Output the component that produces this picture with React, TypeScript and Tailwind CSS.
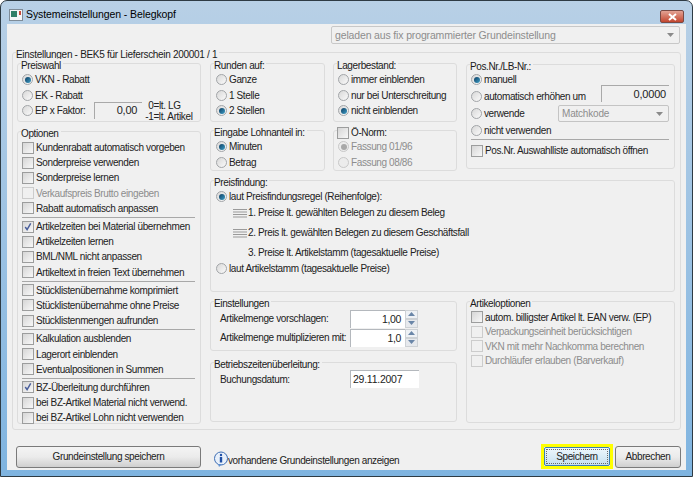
import React from "react";

const Group = ({ title, className = "", children }: { title: React.ReactNode; className?: string; children?: React.ReactNode }) => (
  <div className={`relative rounded-[3px] border border-[#dcdcdc] ${className}`}>
    <div className="absolute -top-[5px] left-[3px] whitespace-nowrap bg-[#f0f0f0] pr-[2px] leading-[13px] text-[#1a1a1a]">{title}</div>
    {children}
  </div>
);

const Radio = ({ checked = false, disabled = false }: { checked?: boolean; disabled?: boolean }) => (
  <span
    className={`flex h-[11px] w-[11px] shrink-0 items-center justify-center rounded-full border ${
      disabled ? "border-[#c8c8c8] bg-[#ececec]" : "border-[#a2a5a8] bg-gradient-to-br from-[#d8d8d8] to-[#fafafa]"
    }`}
  >
    {checked && (
      <span
        className={`h-[6px] w-[6px] rounded-full ${
          disabled ? "bg-[#a8a8a8]" : "bg-gradient-to-br from-[#0f3f63] to-[#3fa0c8]"
        }`}
      />
    )}
  </span>
);

const Check = ({ checked = false, disabled = false }: { checked?: boolean; disabled?: boolean }) => (
  <span
    className={`flex h-[12px] w-[12px] shrink-0 items-center justify-center border ${
      disabled ? "border-[#cccccc] bg-[#f0f0f0]" : "border-[#9c9d9d] bg-gradient-to-br from-[#d6d6d6] to-[#f8f8f8]"
    }`}
  >
    {checked && (
      <svg width="10" height="10" viewBox="0 0 11 11">
        <path d="M2.5 5.5 L4.5 8.5 L8.5 1.5" fill="none" stroke="#4a5f9c" strokeWidth="1.6" />
      </svg>
    )}
  </span>
);

const RadioRow = ({ label, checked, disabled, className = "h-[15.5px]" }: { label: string; checked?: boolean; disabled?: boolean; className?: string }) => (
  <div className={`flex items-center gap-[2px] whitespace-nowrap ${className} ${disabled ? "text-[#8d8d8d]" : ""}`}>
    <Radio checked={checked} disabled={disabled} />
    <span>{label}</span>
  </div>
);

const CheckRow = ({ label, checked, disabled, className = "h-[15.2px]" }: { label: string; checked?: boolean; disabled?: boolean; className?: string }) => (
  <div className={`flex items-center gap-[2px] whitespace-nowrap ${className} ${disabled ? "text-[#8d8d8d]" : ""}`}>
    <Check checked={checked} disabled={disabled} />
    <span>{label}</span>
  </div>
);

const Sep = () => (
  <div className="flex h-[3px] items-center">
    <div className="w-full border-t border-[#a8a8a8]" />
  </div>
);

const DragIcon = () => (
  <svg width="14" height="10" viewBox="0 0 14 10" className="shrink-0">
    <path d="M0 1.5H14M0 4H14M0 6.5H14M0 9H14" stroke="#9a9a9a" strokeWidth="1" />
  </svg>
);

const Arrow = ({ color = "#8a8a8a" }: { color?: string }) => (
  <svg width="7" height="4" viewBox="0 0 7 4" className="shrink-0">
    <path d="M0 0H7L3.5 4Z" fill={color} />
  </svg>
);

const Spin = ({ value, className = "" }: { value: string; className?: string }) => (
  <div className={`flex h-[18px] w-[68px] ${className}`}>
    <div className="flex w-[55px] items-center justify-end border-l border-t border-[#b4b8bd] bg-white pr-[4px] text-[10.5px]">{value}</div>
    <div className="flex w-[13px] flex-col bg-white">
      <div className="flex h-[9px] items-center justify-center border border-[#cdd1d5] bg-[#eef1f5]">
        <svg width="7" height="4" viewBox="0 0 7 4"><path d="M0 4H7L3.5 0Z" fill="#6a86a8" /></svg>
      </div>
      <div className="flex h-[9px] items-center justify-center border border-[#cdd1d5] bg-[#e6e9ed]">
        <Arrow color="#6a86a8" />
      </div>
    </div>
  </div>
);

const Btn = ({ label, className = "" }: { label: string; className?: string }) => (
  <div className={`flex h-[22px] items-center justify-center rounded-[3px] border border-[#7a7a7a] bg-gradient-to-b from-[#f4f4f4] via-[#ebebeb] to-[#cfcfcf] ${className}`}>
    {label}
  </div>
);

export default function App() {
  return (
    <div
      className="flex h-[477px] w-[693px] flex-col overflow-hidden rounded-t-[7px] border border-[#2e3b44] bg-gradient-to-b from-[#b8d0e6] to-[#7fb4e0] text-[10px] leading-[13px] tracking-[-0.38px] text-[#222]"
      style={{ fontFamily: '"Liberation Sans", Arial, sans-serif' }}
    >
      {/* Title bar */}
      <div className="flex h-[23px] shrink-0 items-center pl-[8px] pr-[8px]">
        <svg width="14" height="12" viewBox="0 0 14 12" className="mt-[4px] shrink-0">
          <rect x="0.5" y="0.5" width="13" height="11" fill="#f4f6f8" stroke="#7f8c98" />
          <rect x="2" y="2" width="6" height="6" fill="#2f7f68" />
          <rect x="10" y="2" width="2" height="4" fill="#c84a3a" />
        </svg>
        <span className="ml-[3px] mt-[4px] text-[10.5px] tracking-[-0.1px] text-black">Systemeinstellungen - Belegkopf</span>
        <div className="ml-auto mt-[8px] flex h-[13px] w-[24px] items-center justify-center rounded-[2px] border border-[#7a4a44] bg-gradient-to-b from-[#e2a294] to-[#c2442e]">
          <svg width="9" height="8" viewBox="0 0 9 8">
            <path d="M1 1L8 7M8 1L1 7" stroke="#fff" strokeWidth="2" />
          </svg>
        </div>
      </div>

      {/* Client */}
      <div className="mx-[6px] flex h-[446px] shrink-0 flex-col bg-[#f0f0f0]">
        <div className="flex h-[20px] shrink-0 items-end justify-end pr-[6px]">
          <div className="flex h-[18px] w-[349px] items-center rounded-[2px] border border-[#c8c8c8] bg-[#f0f0f0] pl-[3px] pr-[5px] text-[10.5px] tracking-[-0.15px] text-[#8d8d8d]">
            <span>geladen aus fix programmierter Grundeinstellung</span>
            <span className="ml-auto"><Arrow /></span>
          </div>
        </div>

        {/* Outer group */}
        <Group
          title={<span className="tracking-[-0.3px]">Einstellungen - BEK5 für Lieferschein 200001 / 1</span>}
          className="ml-[5px] mr-[5px] mt-[8px] flex h-[378px] shrink-0 gap-[9px] pb-[6px] pl-[4px] pr-[6px] pt-[10px]"
        >
          {/* Left column */}
          <div className="flex w-[184px] shrink-0 flex-col gap-[9px]">
            <Group title="Preiswahl" className="h-[59px] shrink-0 pl-[4px] pt-[8px]">
              <RadioRow label="VKN - Rabatt" checked />
              <RadioRow label="EK - Rabatt" />
              <div className="flex h-[15.5px] items-center whitespace-nowrap">
                <RadioRow label="EP x Faktor:" />
                <div className="mb-[1px] ml-[9px] flex h-[17px] w-[48px] shrink-0 items-center justify-end border-l border-t border-[#a9a9a9] bg-[#f0f0f0] pr-[5px] text-[11px] tracking-[-0.2px]">0,00</div>
                <div className="ml-[3px] flex flex-col text-[10px] leading-[11px]">
                  <span className="pl-[3px]">0=lt. LG</span>
                  <span>-1=lt. Artikel</span>
                </div>
              </div>
            </Group>
            <Group title="Optionen" className="h-[293px] shrink-0 pl-[4px] pr-[5px] pt-[8px]">
              <CheckRow label="Kundenrabatt automatisch vorgeben" />
              <CheckRow label="Sonderpreise verwenden" />
              <CheckRow label="Sonderpreise lernen" />
              <CheckRow label="Verkaufspreis Brutto eingeben" disabled />
              <CheckRow label="Rabatt automatisch anpassen" />
              <Sep />
              <CheckRow label="Artikelzeiten bei Material übernehmen" checked />
              <CheckRow label="Artikelzeiten lernen" />
              <CheckRow label="BML/NML nicht anpassen" />
              <CheckRow label="Artikeltext in freien Text übernehmen" />
              <Sep />
              <CheckRow label="Stücklistenübernahme komprimiert" />
              <CheckRow label="Stücklistenübernahme ohne Preise" />
              <CheckRow label="Stücklistenmengen aufrunden" />
              <Sep />
              <CheckRow label="Kalkulation ausblenden" />
              <CheckRow label="Lagerort einblenden" />
              <CheckRow label="Eventualpositionen in Summen" />
              <Sep />
              <CheckRow label="BZ-Überleitung durchführen" checked />
              <CheckRow label="bei BZ-Artikel Material nicht verwend." />
              <CheckRow label="bei BZ-Artikel Lohn nicht verwenden" />
            </Group>
          </div>

          {/* Right column */}
          <div className="flex w-[465px] shrink-0 flex-col">
            <div className="flex h-[116px] shrink-0 gap-[9px]">
              <div className="flex w-[247px] shrink-0 flex-col gap-[8px]">
                <div className="flex h-[59px] shrink-0 gap-[8px]">
                  <Group title="Runden auf:" className="w-[115px] shrink-0 pl-[5px] pt-[8px]">
                    <RadioRow label="Ganze" />
                    <RadioRow label="1 Stelle" />
                    <RadioRow label="2 Stellen" checked />
                  </Group>
                  <Group title="Lagerbestand:" className="w-[124px] shrink-0 pl-[4px] pt-[8px]">
                    <RadioRow label="immer einblenden" />
                    <RadioRow label="nur bei Unterschreitung" />
                    <RadioRow label="nicht einblenden" checked />
                  </Group>
                </div>
                <div className="flex h-[41px] shrink-0 gap-[8px]">
                  <Group title="Eingabe Lohnanteil in:" className="w-[115px] shrink-0 pl-[5px] pt-[8px]">
                    <RadioRow label="Minuten" checked />
                    <RadioRow label="Betrag" />
                  </Group>
                  <Group
                    title={
                      <span className="flex items-center gap-[2px]">
                        <Check /> Ö-Norm:
                      </span>
                    }
                    className="w-[124px] shrink-0 pl-[4px] pt-[8px]"
                  >
                    <RadioRow label="Fassung 01/96" checked disabled />
                    <RadioRow label="Fassung 08/86" disabled />
                  </Group>
                </div>
              </div>
              <Group title="Pos.Nr./LB-Nr.:" className="mt-[1px] h-[105px] w-[209px] shrink-0 pl-[4px] pr-[5px] pt-[6px]">
                <RadioRow label="manuell" checked className="h-[17px]" />
                <div className="flex h-[17px] items-center">
                  <RadioRow label="automatisch erhöhen um" className="h-[17px]" />
                  <div className="mb-[6px] ml-auto flex h-[17px] w-[68px] shrink-0 items-center justify-end border-l border-t border-[#a9a9a9] bg-[#f0f0f0] pr-[3px] text-[11px] tracking-[-0.2px]">0,0000</div>
                </div>
                <div className="flex h-[17px] items-center">
                  <RadioRow label="verwende" className="h-[17px]" />
                  <div className="ml-auto flex h-[17px] w-[111px] shrink-0 items-center rounded-[2px] border border-[#c4c4c4] pl-[3px] pr-[5px] tracking-[-0.2px] text-[#8d8d8d]">
                    <span>Matchkode</span>
                    <span className="ml-auto"><Arrow /></span>
                  </div>
                </div>
                <RadioRow label="nicht verwenden" className="h-[17px]" />
                <div className="border-t border-[#a8a8a8]" />
                <CheckRow label="Pos.Nr. Auswahlliste automatisch öffnen" className="mt-[3px] h-[15px]" />
              </Group>
            </div>

            <Group title="Preisfindung:" className="mt-[1px] h-[112px] shrink-0 pl-[5px] pt-[8px]">
              <RadioRow label="laut Preisfindungsregel (Reihenfolge):" checked />
              <div className="-mt-[2px] ml-[17px] flex h-[20px] items-center gap-[1px]">
                <DragIcon />
                <span>1. Preise lt. gewählten Belegen zu diesem Beleg</span>
              </div>
              <div className="ml-[17px] flex h-[20px] items-center gap-[1px]">
                <DragIcon />
                <span>2. Preis lt. gewählten Belegen zu diesem Geschäftsfall</span>
              </div>
              <div className="ml-[32px] flex h-[20px] items-center">3. Preise lt. Artikelstamm (tagesaktuelle Preise)</div>
              <RadioRow label="laut Artikelstamm (tagesaktuelle Preise)" className="-mt-[2px] h-[15.5px]" />
            </Group>

            <div className="mt-[9px] flex h-[122px] shrink-0 gap-[9px]">
              <div className="flex w-[247px] shrink-0 flex-col gap-[11px]">
                <Group title="Einstellungen" className="h-[50px] shrink-0 pl-[9px] pt-[7px]">
                  <div className="flex h-[19px] items-center">
                    <span className="w-[130px] shrink-0">Artikelmenge vorschlagen:</span>
                    <Spin value="1,00" />
                  </div>
                  <div className="flex h-[19px] items-center">
                    <span className="w-[130px] shrink-0 whitespace-nowrap">Artikelmenge multiplizieren mit:</span>
                    <Spin value="1,0" />
                  </div>
                </Group>
                <Group title="Betriebszeitenüberleitung:" className="h-[60px] shrink-0 pl-[9px] pt-[7px]">
                  <div className="flex h-[18px] items-center">
                    <span className="w-[130px] shrink-0">Buchungsdatum:</span>
                    <div className="flex h-[18px] w-[69px] items-center border-l border-t border-[#b4b8bd] bg-white pl-[2px] text-[10.5px] tracking-[-0.25px]">29.11.2007</div>
                  </div>
                </Group>
              </div>
              <Group title="Artikeloptionen" className="h-[122px] w-[209px] shrink-0 pl-[4px] pt-[8px]">
                <CheckRow label="autom. billigster Artikel lt. EAN verw. (EP)" className="h-[14.5px]" />
                <CheckRow label="Verpackungseinheit berücksichtigen" disabled className="h-[14.5px]" />
                <CheckRow label="VKN mit mehr Nachkomma berechnen" disabled className="h-[14.5px]" />
                <CheckRow label="Durchläufer erlauben (Barverkauf)" disabled className="h-[14.5px]" />
              </Group>
            </div>
          </div>
        </Group>

        {/* Footer */}
        <div className="mt-[14px] flex h-[25px] shrink-0 items-center pl-[9px] pr-[5px]">
          <Btn label="Grundeinstellung speichern" className="w-[185px] shrink-0" />
          <svg width="16" height="17" viewBox="0 0 16 17" className="ml-[12px] mt-[6px] shrink-0">
            <circle cx="8" cy="7.5" r="6.5" fill="#e8f0fa" stroke="#3f6fb5" />
            <path d="M5 13L9 13L6 16Z" fill="#5f8fcf" />
            <circle cx="8" cy="4" r="1.2" fill="#1f4fa5" />
            <rect x="6.8" y="6" width="2.4" height="5.5" fill="#1f4fa5" />
          </svg>
          <span className="-ml-[1px] mt-[7px] whitespace-nowrap">vorhandene Grundeinstellungen anzeigen</span>
          <div className="ml-auto flex h-[25px] w-[72px] shrink-0 items-center justify-center border-[3px] border-[#ffff00]">
            <div className="flex h-[19px] w-[66px] items-center justify-center rounded-[2px] border border-[#3c7fb1] bg-gradient-to-b from-[#eef7fc] to-[#c6e0f0]">
              <div className="flex h-[15px] w-[62px] items-center justify-center border border-dotted border-[#6a6a6a]">Speichern</div>
            </div>
          </div>
          <Btn label="Abbrechen" className="ml-[2px] w-[66px] shrink-0" />
        </div>
      </div>
    </div>
  );
}
